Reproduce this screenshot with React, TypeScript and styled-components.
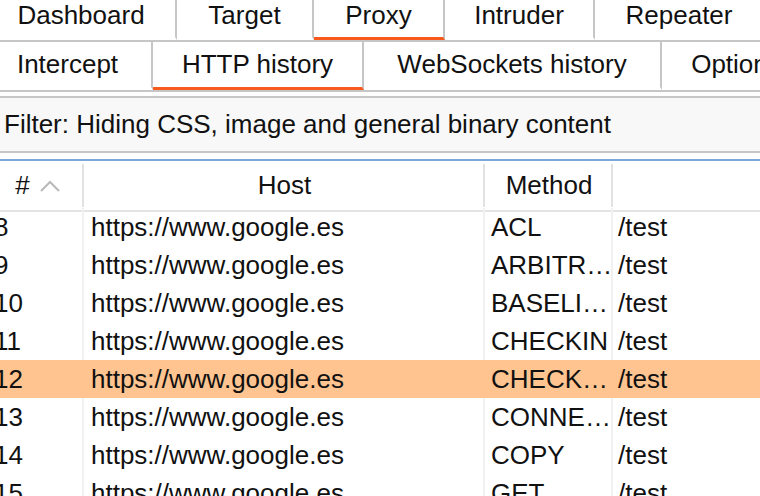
import React from "react";
import styled, { createGlobalStyle } from "styled-components";

const GlobalStyle = createGlobalStyle`
  html, body {
    margin: 0;
    padding: 0;
    background: #ffffff;
    overflow: hidden;
  }
  body {
    font-family: "Liberation Sans", Arial, Helvetica, sans-serif;
    font-size: 26px;
    color: #111111;
  }
`;

const Screen = styled.div`
  width: 760px;
  height: 496px;
  overflow: hidden;
  display: flex;
  flex-direction: column;
  background: #ffffff;
`;

const TabRow = styled.div<{ $offset: number; $height: number; $top?: number }>`
  display: flex;
  flex: 0 0 auto;
  height: ${(p) => p.$height}px;
  margin-left: ${(p) => -p.$offset}px;
  margin-top: ${(p) => p.$top ?? 0}px;
  border-bottom: 2px solid #c6c6c6;
  box-sizing: border-box;
  white-space: nowrap;
`;

const Tab = styled.div<{ $width: number; $active?: boolean }>`
  flex: 0 0 auto;
  width: ${(p) => p.$width}px;
  box-sizing: border-box;
  display: flex;
  align-items: center;
  justify-content: center;
  border-right: 2px solid #c6c6c6;
  border-bottom: 3px solid ${(p) => (p.$active ? "#f95a1c" : "transparent")};
  color: #111111;
  background: #ffffff;
`;

const FilterBar = styled.div`
  flex: 0 0 auto;
  margin-top: 4px;
  height: 57px;
  box-sizing: border-box;
  border-top: 2px solid #c6c6c6;
  border-bottom: 2px solid #c6c6c6;
  background: #f8f8f8;
  display: flex;
  align-items: center;
  padding-left: 4px;
  white-space: nowrap;
`;

const Table = styled.div`
  flex: 0 0 auto;
  margin-top: 6px;
  margin-left: -9px;
  border-top: 2px solid #7aa8da;
`;

const COLS = "93px 401px 128px 1fr";

const HeaderRow = styled.div`
  display: grid;
  grid-template-columns: ${COLS};
  height: 51px;
  box-sizing: border-box;
  border-bottom: 2px solid #e4e4e4;
`;

const HeaderCell = styled.div<{ $last?: boolean }>`
  position: relative;
  display: flex;
  align-items: center;
  justify-content: center;
  gap: 10px;
  white-space: nowrap;
  &::after {
    content: "";
    display: ${(p) => (p.$last ? "none" : "block")};
    position: absolute;
    right: 0;
    top: 3px;
    bottom: 3px;
    width: 2px;
    background: #e2e2e2;
  }
`;

const Body = styled.div`
  margin-top: -4px;
`;

const Row = styled.div<{ $selected?: boolean }>`
  display: grid;
  grid-template-columns: ${COLS};
  height: 38px;
  background: ${(p) => (p.$selected ? "#ffc48f" : "transparent")};
`;

const Cell = styled.div<{ $pad: number; $selected?: boolean; $last?: boolean }>`
  display: flex;
  align-items: center;
  padding-left: ${(p) => p.$pad}px;
  box-sizing: border-box;
  white-space: nowrap;
  overflow: hidden;
  border-right: 2px solid
    ${(p) => (p.$selected || p.$last ? "transparent" : "#f1f1f1")};
`;

const SortArrow = () => (
  <svg width="20" height="12" viewBox="0 0 20 12" aria-hidden="true">
    <polyline
      points="1,11 10,2 19,11"
      fill="none"
      stroke="#b9b9b9"
      strokeWidth="2"
    />
  </svg>
);

const topTabs = [
  { label: "Dashboard", width: 190 },
  { label: "Target", width: 137 },
  { label: "Proxy", width: 131, active: true },
  { label: "Intruder", width: 150 },
  { label: "Repeater", width: 170 },
];

const subTabs = [
  { label: "Intercept", width: 169 },
  { label: "HTTP history", width: 211, active: true },
  { label: "WebSockets history", width: 298 },
  { label: "Options", width: 150 },
];

const rows = [
  { n: 8, method: "ACL" },
  { n: 9, method: "ARBITR…" },
  { n: 10, method: "BASELI…" },
  { n: 11, method: "CHECKIN" },
  { n: 12, method: "CHECK…", selected: true },
  { n: 13, method: "CONNE…" },
  { n: 14, method: "COPY" },
  { n: 15, method: "GET" },
];

export default function App() {
  return (
    <>
      <GlobalStyle />
      <Screen>
        <TabRow $offset={13} $height={48} $top={-6}>
          {topTabs.map((t) => (
            <Tab key={t.label} $width={t.width} $active={t.active}>
              {t.label}
            </Tab>
          ))}
        </TabRow>
        <TabRow $offset={16} $height={50}>
          {subTabs.map((t) => (
            <Tab key={t.label} $width={t.width} $active={t.active}>
              {t.label}
            </Tab>
          ))}
        </TabRow>
        <FilterBar>Filter: Hiding CSS, image and general binary content</FilterBar>
        <Table>
          <HeaderRow>
            <HeaderCell>
              <span>#</span>
              <SortArrow />
            </HeaderCell>
            <HeaderCell>Host</HeaderCell>
            <HeaderCell>Method</HeaderCell>
            <HeaderCell $last />
          </HeaderRow>
          <Body>
            {rows.map((r) => (
              <Row key={r.n} $selected={r.selected}>
                <Cell $pad={3} $selected={r.selected}>{r.n}</Cell>
                <Cell $pad={7} $selected={r.selected}>https://www.google.es</Cell>
                <Cell $pad={6} $selected={r.selected}>{r.method}</Cell>
                <Cell $pad={5} $selected={r.selected} $last>/test</Cell>
              </Row>
            ))}
          </Body>
        </Table>
      </Screen>
    </>
  );
}
